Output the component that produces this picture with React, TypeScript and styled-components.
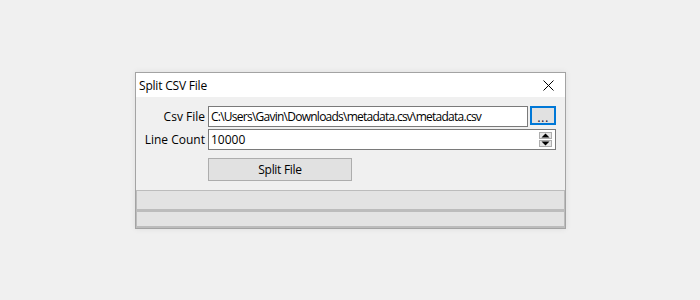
import React from 'react'
import { styled, createGlobalStyle } from 'styled-components'

const GlobalStyle = createGlobalStyle`
    html, body {
        margin: 0;
        padding: 0;
        background: #f0f0f0;
    }
    body {
        font-family: 'Segoe UI', 'Open Sans', 'Noto Sans', sans-serif;
        font-size: 12px;
        color: #000000;
    }
`

const Page = styled.div`
    width: 700px;
    height: 300px;
    padding: 72px 0 0 135px;
    box-sizing: border-box;
`

const Window = styled.div`
    width: 431px;
    border: 1px solid #a3a3a3;
    background: #f0f0f0;
    box-sizing: border-box;
    box-shadow: 0 0 6px rgba(0, 0, 0, 0.08);
`

const TitleBar = styled.div`
    height: 24px;
    background: #ffffff;
    display: flex;
    align-items: center;
    justify-content: space-between;
    padding: 0 9px 0 3px;
`

const Title = styled.span`
    font-size: 12px;
    line-height: 16px;
    padding-top: 1px;
    letter-spacing: -0.2px;
`

const CloseButton = styled.button`
    width: 16px;
    height: 16px;
    padding: 0;
    border: none;
    background: transparent;
    display: flex;
    align-items: center;
    justify-content: center;
`

const Form = styled.div`
    display: grid;
    grid-template-columns: 69px 348px;
    column-gap: 3px;
    row-gap: 2px;
    padding: 9px 0 0 0;
`

const Label = styled.label`
    text-align: right;
    align-self: center;
    font-size: 12px;
    line-height: 16px;
`

const FieldRow = styled.div`
    display: flex;
    gap: 2px;
    height: 21px;
`

const TextBox = styled.div`
    flex: 1;
    height: 21px;
    box-sizing: border-box;
    border: 1px solid #7a7a7a;
    background: #ffffff;
    display: flex;
    align-items: center;
    padding: 0 2px;
    font-size: 12px;
    white-space: nowrap;
    overflow: hidden;
`

const PathText = styled.span`
    letter-spacing: -0.75px;
`

const BrowseButton = styled.button`
    width: 26px;
    height: 19px;
    box-sizing: border-box;
    border: 2px solid #0078d7;
    background: #e1e1e1;
    font-family: inherit;
    font-size: 13px;
    line-height: 10px;
    letter-spacing: 0.5px;
    padding: 2px 0 0 0;
    color: #1a1a40;
`

const Spinner = styled.div`
    display: flex;
    flex-direction: column;
    gap: 1px;
    margin-left: auto;
    margin-right: 1px;
`

const SpinButton = styled.div`
    width: 13px;
    height: 7px;
    box-sizing: border-box;
    border: 1px solid #adadad;
    background: #e5e5e5;
    display: flex;
    align-items: center;
    justify-content: center;
`

const ActionCell = styled.div`
    grid-column: 2;
    padding-top: 6px;
`

const ActionButton = styled.button`
    width: 144px;
    height: 23px;
    box-sizing: border-box;
    border: 1px solid #adadad;
    background: #e1e1e1;
    font-family: inherit;
    font-size: 12px;
    letter-spacing: -0.3px;
    color: #000000;
    padding: 0;
`

const StatusArea = styled.div`
    margin-top: 9px;
    display: flex;
    flex-direction: column;
`

const StatusStrip = styled.div<{ $h: number }>`
    height: ${props => props.$h}px;
    box-sizing: border-box;
    border: 1px solid #bcbcbc;
    border-bottom-width: 2px;
    background: #e3e3e3;
`

const Arrow = ({ up }: { up?: boolean }) => (
    <svg width="9" height="5" viewBox="0 0 9 5">
        <path d={up ? 'M0.5 4.5 L4.5 0.5 L8.5 4.5 Z' : 'M0.5 0.5 L4.5 4.5 L8.5 0.5 Z'} fill="#000" />
    </svg>
)

export default function App() {
    return (
        <>
            <GlobalStyle />
            <Page>
                <Window>
                    <TitleBar>
                        <Title>Split CSV File</Title>
                        <CloseButton aria-label="Close">
                            <svg width="11" height="11" viewBox="0 0 11 11">
                                <path d="M0.5 0.5 L10.5 10.5 M10.5 0.5 L0.5 10.5" stroke="#000" strokeWidth="1" />
                            </svg>
                        </CloseButton>
                    </TitleBar>
                    <Form>
                        <Label>Csv File</Label>
                        <FieldRow>
                            <TextBox>
                                <PathText>C:\Users\Gavin\Downloads\metadata.csv\metadata.csv</PathText>
                            </TextBox>
                            <BrowseButton>...</BrowseButton>
                        </FieldRow>
                        <Label>Line Count</Label>
                        <FieldRow>
                            <TextBox>
                                10000
                                <Spinner>
                                    <SpinButton><Arrow up /></SpinButton>
                                    <SpinButton><Arrow /></SpinButton>
                                </Spinner>
                            </TextBox>
                        </FieldRow>
                        <ActionCell>
                            <ActionButton>Split File</ActionButton>
                        </ActionCell>
                    </Form>
                    <StatusArea>
                        <StatusStrip $h={21} />
                        <StatusStrip $h={17} />
                    </StatusArea>
                </Window>
            </Page>
        </>
    )
}
